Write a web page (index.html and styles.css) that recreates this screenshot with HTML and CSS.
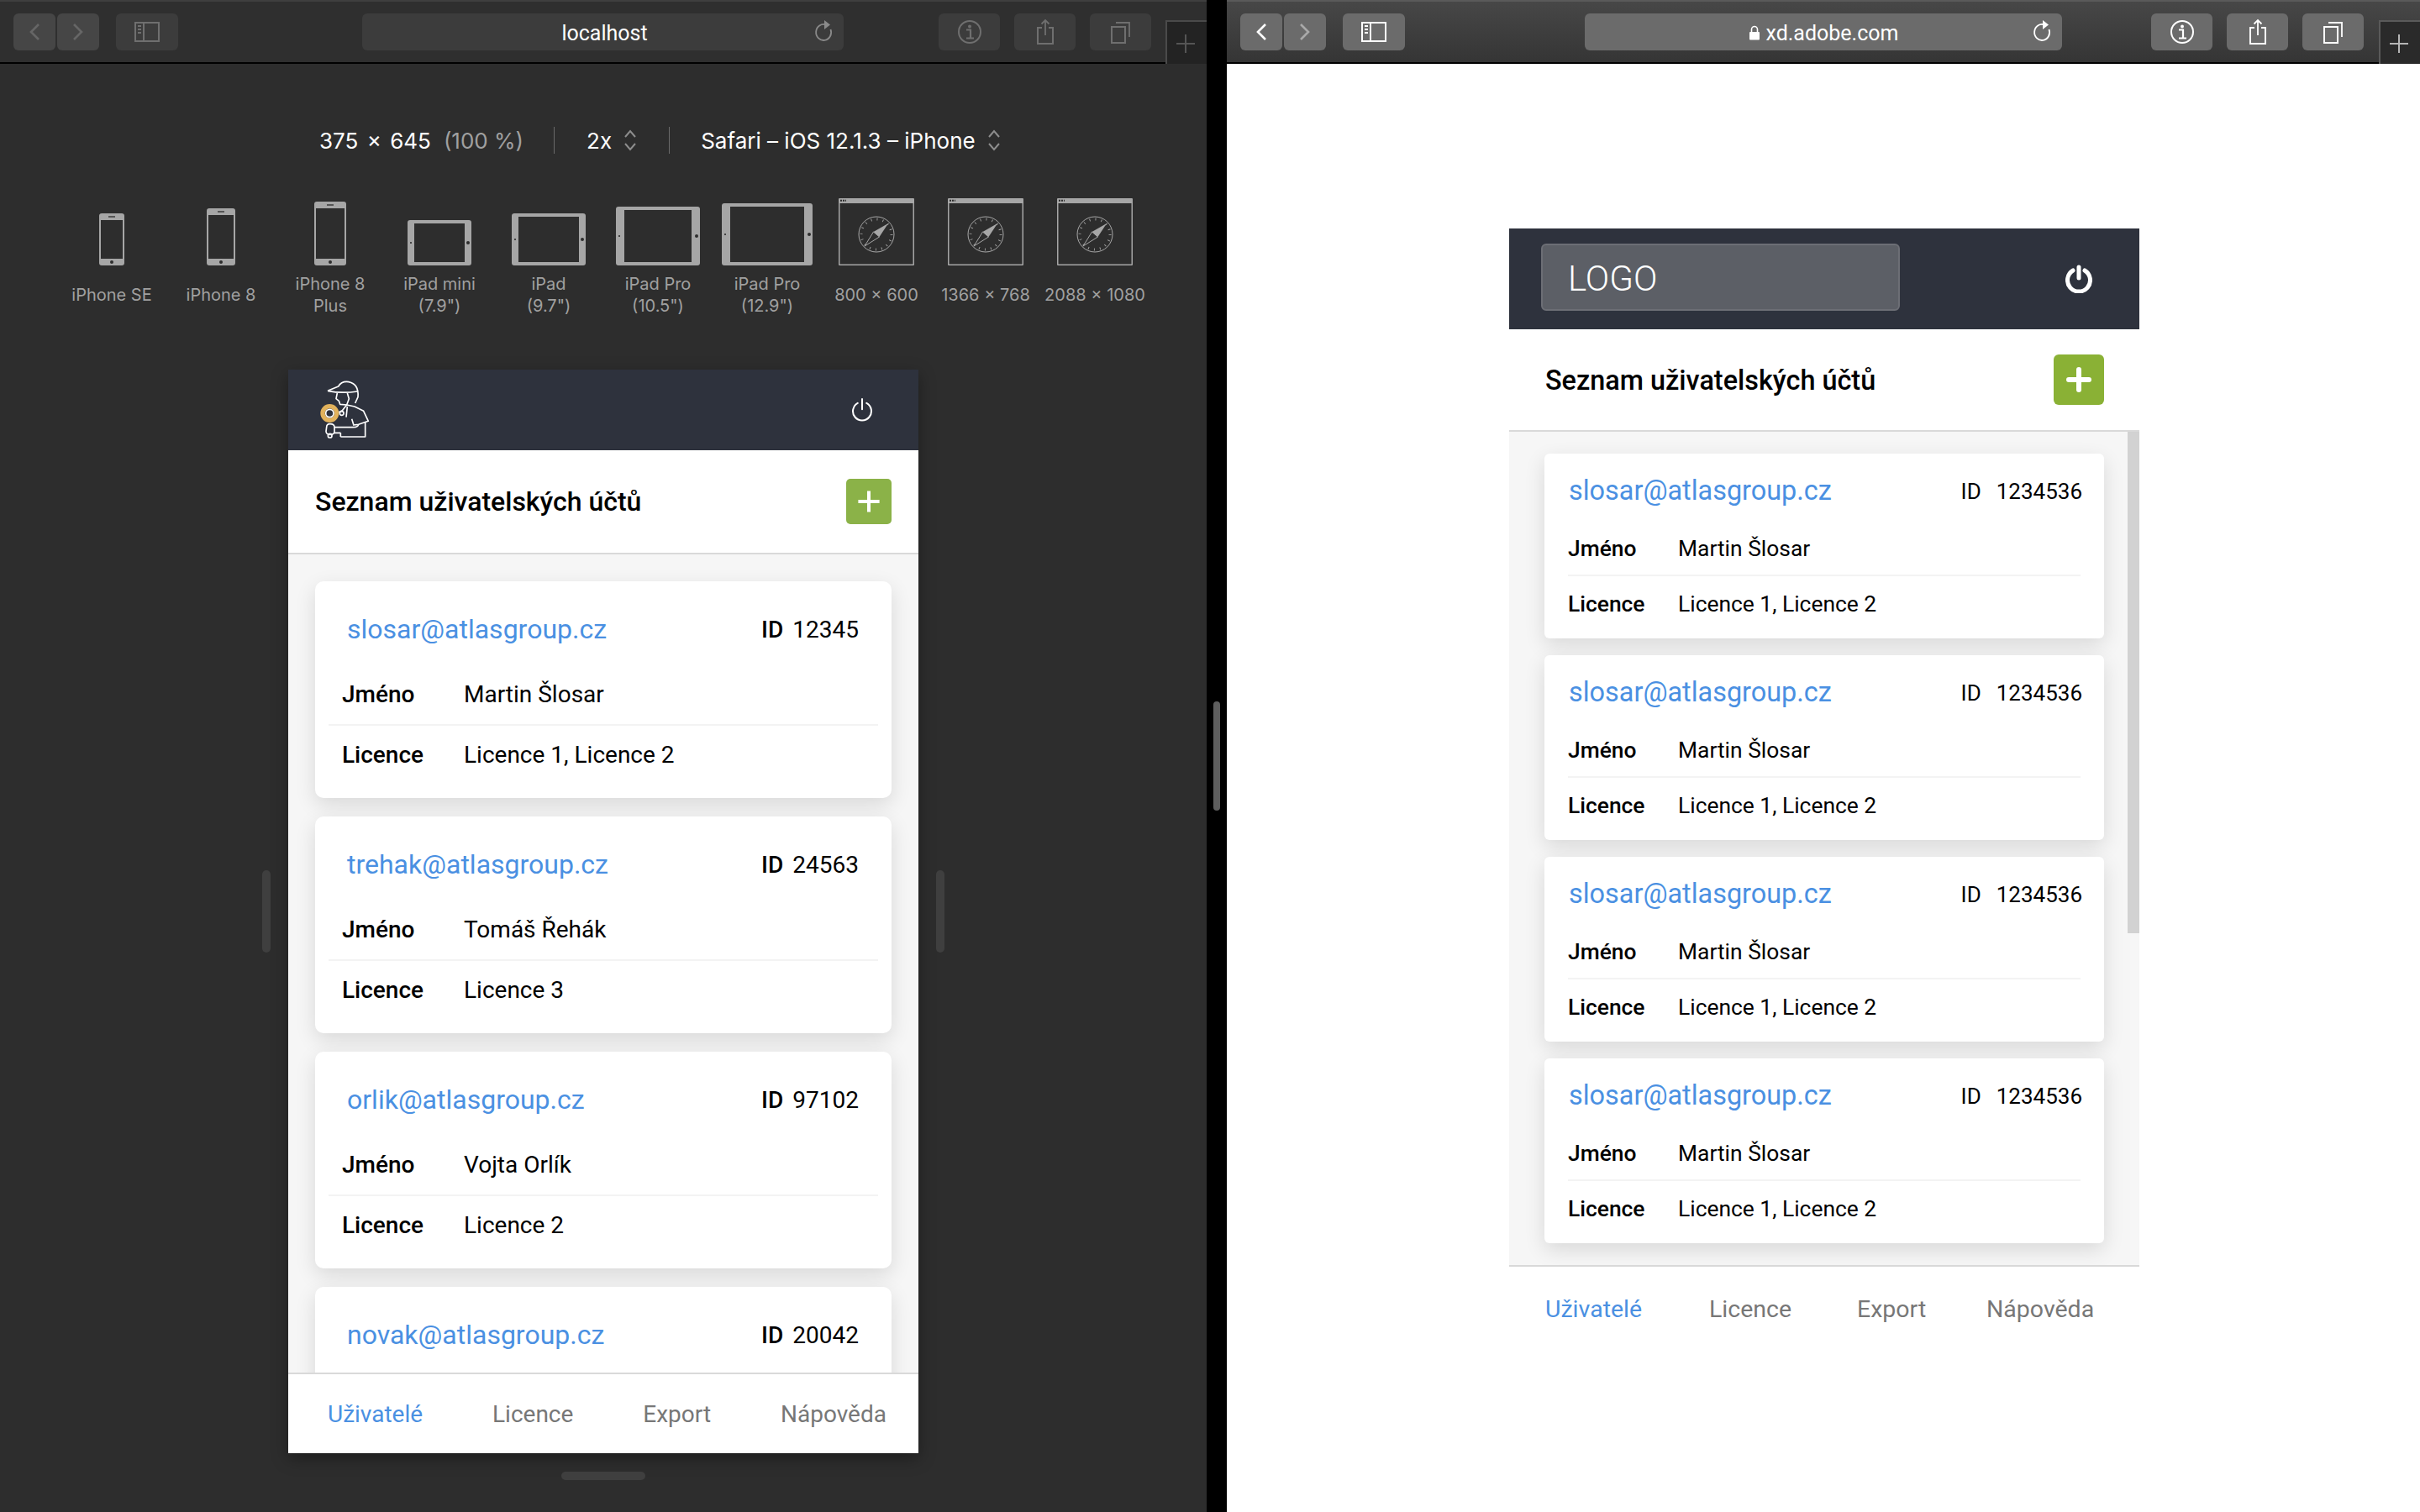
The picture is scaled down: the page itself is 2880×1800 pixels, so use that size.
FILE: index.html
```html
<!DOCTYPE html>
<html lang="en">
<head>
    <meta charset="UTF-8">
    <meta name="viewport" content="width=device-width, initial-scale=1.0">
    <title>Responsive Design Mode</title>
    <link rel="stylesheet" href="styles.css">
</head>
<body>
    <svg class="defs" width="0" height="0">
        <symbol id="i-back" viewBox="0 0 20 30"><path d="M15 6 L6 15 L15 24" fill="none" stroke="currentColor" stroke-width="2.6"/></symbol>
        <symbol id="i-forward" viewBox="0 0 20 30"><path d="M5 6 L14 15 L5 24" fill="none" stroke="currentColor" stroke-width="2.6"/></symbol>
        <symbol id="i-sidebar" viewBox="0 0 30 24"><path d="M1 1 H29 V23 H1 Z M11 1 V23" fill="none" stroke="currentColor" stroke-width="2"/><path d="M4 5 H8 M4 9 H8 M4 13 H8" stroke="currentColor" stroke-width="2"/></symbol>
        <symbol id="i-reload" viewBox="0 0 24 28"><path d="M15 6.5 A9 9.5 0 1 0 20.5 12" fill="none" stroke="currentColor" stroke-width="1.8"/><path d="M13 1 L20 6.5 L13 12 Z" fill="currentColor"/></symbol>
        <symbol id="i-info" viewBox="0 0 30 30"><circle cx="15" cy="15" r="13" fill="none" stroke="currentColor" stroke-width="2"/><circle cx="15" cy="8.5" r="2" fill="currentColor"/><path d="M11 12.5 H16 V22 M11 22.5 H20" fill="none" stroke="currentColor" stroke-width="2.2"/></symbol>
        <symbol id="i-share" viewBox="0 0 24 32"><path d="M8 11 H3 V30 H21 V11 H16" fill="none" stroke="currentColor" stroke-width="2"/><path d="M12 20 V2 M7.5 6.5 L12 2 L16.5 6.5" fill="none" stroke="currentColor" stroke-width="1.8"/></symbol>
        <symbol id="i-tabs" viewBox="0 0 26 28"><rect x="2" y="8" width="16" height="19" fill="none" stroke="currentColor" stroke-width="2"/><path d="M7 3 H23 V20" fill="none" stroke="currentColor" stroke-width="1.8"/></symbol>
        <symbol id="i-updown" viewBox="0 0 16 28"><path d="M2 10 L8 3 L14 10 M2 18 L8 25 L14 18" fill="none" stroke="#8d8d8d" stroke-width="2"/></symbol>
        <symbol id="i-compass" viewBox="0 0 44 44">
            <circle cx="22" cy="22" r="21" fill="none" stroke="#a6a6a6" stroke-width="1"/>
            <circle cx="22" cy="22" r="18" fill="none" stroke="#a6a6a6" stroke-width="3" stroke-dasharray="0.9 6.17"/>
            <path d="M36 9 L25.5 25 L18.5 19 Z" fill="#a6a6a6"/>
            <path d="M8 36 L18.5 19 L25.5 25 Z" fill="none" stroke="#a6a6a6" stroke-width="1"/>
        </symbol>
        <symbol id="i-window" viewBox="0 0 90 80">
            <rect x="0" y="0" width="90" height="80" fill="#a6a6a6" rx="1"/>
            <rect x="1.5" y="6" width="87" height="72.5" fill="#2d2d2d"/>
            <path d="M2 2.7 H9" stroke="#2d2d2d" stroke-width="2" stroke-dasharray="2 1"/>
            <use href="#i-compass" x="23" y="21" width="44" height="44"/>
        </symbol>
        <symbol id="i-power" viewBox="0 0 32 36"><path d="M9.5 8 A13.5 13.5 0 1 0 22.5 8" fill="none" stroke="currentColor" stroke-width="2.5" stroke-linecap="round"/><path d="M16 2 V17" fill="none" stroke="currentColor" stroke-width="2.5" stroke-linecap="round"/></symbol>
        <symbol id="i-power-bold" viewBox="0 0 32 34"><path d="M9 7 A13.5 13.5 0 1 0 23 7" fill="none" stroke="currentColor" stroke-width="5" stroke-linecap="round"/><path d="M16 3 V16" fill="none" stroke="currentColor" stroke-width="5" stroke-linecap="round"/></symbol>
        <symbol id="i-plus" viewBox="0 0 60 60"><path d="M30 16 V44 M16 30 H44" stroke="#fff" stroke-width="4.5" fill="none"/></symbol>
        <symbol id="i-plus-bold" viewBox="0 0 60 60"><path d="M30 18 V42 M18 30 H42" stroke="#fff" stroke-width="6" stroke-linecap="round" fill="none"/></symbol>
    </svg>

    <!-- left pane: responsive design mode -->
    <section class="pane pane-dark">
        <div class="toolbar">
            <div class="tool tool-back"><svg><use href="#i-back"/></svg></div>
            <div class="tool tool-forward"><svg><use href="#i-forward"/></svg></div>
            <div class="tool tool-sidebar"><svg><use href="#i-sidebar"/></svg></div>
            <div class="address"><span class="address-text">localhost</span><svg class="reload"><use href="#i-reload"/></svg></div>
            <div class="tool tool-info"><svg><use href="#i-info"/></svg></div>
            <div class="tool tool-share"><svg><use href="#i-share"/></svg></div>
            <div class="tool tool-tabs"><svg><use href="#i-tabs"/></svg></div>
            <div class="new-tab"><span class="plus-h"></span><span class="plus-v"></span></div>
        </div>

        <div class="rdm-info">
            <span class="size">375 × 645</span>
            <span class="percent">(100 %)</span>
            <span class="sep sep-first"></span>
            <span class="size">2x</span>
            <svg class="updown"><use href="#i-updown"/></svg>
            <span class="sep sep-second"></span>
            <span class="size">Safari – iOS 12.1.3 – iPhone</span>
            <svg class="updown"><use href="#i-updown"/></svg>
        </div>

        <div class="devices">
            <div class="device">
                <div class="device-icon"><div class="phone-shape se"><i class="dot"></i></div></div>
                <div class="device-label">iPhone SE</div>
            </div>
            <div class="device">
                <div class="device-icon"><div class="phone-shape eight"><i class="dot"></i></div></div>
                <div class="device-label">iPhone 8</div>
            </div>
            <div class="device">
                <div class="device-icon"><div class="phone-shape plus"><i class="dot"></i></div></div>
                <div class="device-label">iPhone 8<br>Plus</div>
            </div>
            <div class="device">
                <div class="device-icon"><div class="tablet-shape mini"><i class="dot"></i></div></div>
                <div class="device-label">iPad mini<br>(7.9")</div>
            </div>
            <div class="device">
                <div class="device-icon"><div class="tablet-shape ipad"><i class="dot"></i></div></div>
                <div class="device-label">iPad<br>(9.7")</div>
            </div>
            <div class="device">
                <div class="device-icon"><div class="tablet-shape pro10"><i class="dot"></i></div></div>
                <div class="device-label">iPad Pro<br>(10.5")</div>
            </div>
            <div class="device">
                <div class="device-icon"><div class="tablet-shape pro12"><i class="dot"></i></div></div>
                <div class="device-label">iPad Pro<br>(12.9")</div>
            </div>
            <div class="device">
                <div class="device-icon"><svg class="window"><use href="#i-window"/></svg></div>
                <div class="device-label">800 × 600</div>
            </div>
            <div class="device">
                <div class="device-icon"><svg class="window"><use href="#i-window"/></svg></div>
                <div class="device-label">1366 × 768</div>
            </div>
            <div class="device">
                <div class="device-icon"><svg class="window"><use href="#i-window"/></svg></div>
                <div class="device-label">2088 × 1080</div>
            </div>
        </div>

        <div class="stage">
            <span class="grip"></span>
            <div class="app app-live">
                <header class="app-header">
                    <svg class="logo" viewBox="0 0 300 270">
                        <g fill="none" stroke="#fff" stroke-width="5" stroke-linejoin="round">
                            <path d="M60 76 L98 60 Q110 40 135 44 Q172 52 168 98 L158 120"/>
                            <path d="M60 76 Q110 86 166 78"/>
                            <path d="M94 84 L90 104 L100 112 L104 124 L128 126 L136 104 L130 84"/>
                            <path d="M100 152 L112 146 L128 126 L156 132 L188 148 L205 184 L170 196 L150 198"/>
                            <path d="M130 132 L126 170 M146 176 L152 196"/>
                            <circle cx="110" cy="156" r="7"/>
                            <path d="M84 206 H150 Q168 206 170 196 M84 226 H106"/>
                            <path d="M106 240 H194 V186 M106 240 V226"/>
                            <path d="M56 206 Q56 194 68 194 Q84 194 84 206 V222 Q84 232 68 232 Q54 232 54 220 Z"/>
                            <circle cx="68" cy="236" r="7"/>
                        </g>
                        <circle cx="67" cy="156" r="25" fill="none" stroke="#e2b25c" stroke-width="16"/>
                        <circle cx="67" cy="156" r="14" fill="none" stroke="#fff" stroke-width="5"/>
                    </svg>
                    <svg class="power"><use href="#i-power"/></svg>
                </header>
                <div class="app-title">
                    <h1>Seznam uživatelských účtů</h1>
                    <button class="add"><svg><use href="#i-plus"/></svg></button>
                </div>
                <div class="list">
                    <article class="card">
                        <div class="card-head"><a class="email">slosar@atlasgroup.cz</a><span class="uid"><b>ID</b>12345</span></div>
                        <div class="card-row"><b>Jméno</b><span>Martin Šlosar</span></div>
                        <div class="card-row"><b>Licence</b><span>Licence 1, Licence 2</span></div>
                    </article>
                    <article class="card">
                        <div class="card-head"><a class="email">trehak@atlasgroup.cz</a><span class="uid"><b>ID</b>24563</span></div>
                        <div class="card-row"><b>Jméno</b><span>Tomáš Řehák</span></div>
                        <div class="card-row"><b>Licence</b><span>Licence 3</span></div>
                    </article>
                    <article class="card">
                        <div class="card-head"><a class="email">orlik@atlasgroup.cz</a><span class="uid"><b>ID</b>97102</span></div>
                        <div class="card-row"><b>Jméno</b><span>Vojta Orlík</span></div>
                        <div class="card-row"><b>Licence</b><span>Licence 2</span></div>
                    </article>
                    <article class="card">
                        <div class="card-head"><a class="email">novak@atlasgroup.cz</a><span class="uid"><b>ID</b>20042</span></div>
                    </article>
                </div>
                <nav class="app-nav">
                    <a class="active">Uživatelé</a>
                    <a>Licence</a>
                    <a>Export</a>
                    <a>Nápověda</a>
                </nav>
            </div>
            <span class="grip"></span>
        </div>
        <div class="grip-bottom"></div>
    </section>

    <div class="splitter"><span class="splitter-handle"></span></div>

    <!-- right pane: adobe xd prototype -->
    <section class="pane pane-light">
        <div class="toolbar">
            <div class="tool tool-back"><svg><use href="#i-back"/></svg></div>
            <div class="tool tool-forward"><svg><use href="#i-forward"/></svg></div>
            <div class="tool tool-sidebar"><svg><use href="#i-sidebar"/></svg></div>
            <div class="address">
                <span class="address-text">
                    <svg class="lock" viewBox="0 0 14 18"><path d="M3.5 8 V5 A3.5 3.5 0 0 1 10.5 5 V8" fill="none" stroke="#fff" stroke-width="1.6"/><rect x="1" y="8" width="12" height="9.5" rx="1" fill="#fff"/></svg>xd.adobe.com
                </span>
                <svg class="reload"><use href="#i-reload"/></svg>
            </div>
            <div class="tool tool-info"><svg><use href="#i-info"/></svg></div>
            <div class="tool tool-share"><svg><use href="#i-share"/></svg></div>
            <div class="tool tool-tabs"><svg><use href="#i-tabs"/></svg></div>
            <div class="new-tab"><span class="plus-h"></span><span class="plus-v"></span></div>
        </div>

        <div class="proto">
            <div class="app app-proto">
                <header class="app-header">
                    <div class="logo-box">LOGO</div>
                    <svg class="power"><use href="#i-power-bold"/></svg>
                </header>
                <div class="app-title">
                    <h1>Seznam uživatelských účtů</h1>
                    <button class="add"><svg><use href="#i-plus-bold"/></svg></button>
                </div>
                <div class="list">
                    <span class="scroll-thumb"></span>
                    <article class="card">
                        <div class="card-head"><a class="email">slosar@atlasgroup.cz</a><span class="uid"><b>ID</b>1234536</span></div>
                        <div class="card-row"><b>Jméno</b><span>Martin Šlosar</span></div>
                        <div class="card-row"><b>Licence</b><span>Licence 1, Licence 2</span></div>
                    </article>
                    <article class="card">
                        <div class="card-head"><a class="email">slosar@atlasgroup.cz</a><span class="uid"><b>ID</b>1234536</span></div>
                        <div class="card-row"><b>Jméno</b><span>Martin Šlosar</span></div>
                        <div class="card-row"><b>Licence</b><span>Licence 1, Licence 2</span></div>
                    </article>
                    <article class="card">
                        <div class="card-head"><a class="email">slosar@atlasgroup.cz</a><span class="uid"><b>ID</b>1234536</span></div>
                        <div class="card-row"><b>Jméno</b><span>Martin Šlosar</span></div>
                        <div class="card-row"><b>Licence</b><span>Licence 1, Licence 2</span></div>
                    </article>
                    <article class="card">
                        <div class="card-head"><a class="email">slosar@atlasgroup.cz</a><span class="uid"><b>ID</b>1234536</span></div>
                        <div class="card-row"><b>Jméno</b><span>Martin Šlosar</span></div>
                        <div class="card-row"><b>Licence</b><span>Licence 1, Licence 2</span></div>
                    </article>
                </div>
                <nav class="app-nav">
                    <a class="active">Uživatelé</a>
                    <a>Licence</a>
                    <a>Export</a>
                    <a>Nápověda</a>
                </nav>
            </div>
        </div>
    </section>
</body>
</html>
```
FILE: styles.css
```css
* {
    box-sizing: border-box;
}

body {
    margin: 0;
    width: 2880px;
    height: 1800px;
    display: flex;
    overflow: hidden;
    background-color: #000;
    font-family: Roboto, "Noto Sans", sans-serif;
}

.defs {
    position: absolute;
}

.pane {
    height: 1800px;
    display: flex;
    flex-direction: column;
}

.pane-dark {
    width: 1436px;
    background-color: #2d2d2d;
}

.pane-light {
    width: 1420px;
    background-color: #fff;
}

.splitter {
    width: 24px;
    background-color: #000;
    display: flex;
    align-items: center;
    justify-content: center;
}

.splitter-handle {
    width: 8px;
    height: 130px;
    border-radius: 4px;
    background-color: #5e5e5e;
}

/* browser toolbar */
.toolbar {
    height: 76px;
    flex: none;
    display: flex;
    padding-top: 16px;
    border-top: 2px solid #4a4a4a;
    border-bottom: 2px solid #000;
    position: relative;
}

.pane-dark .toolbar {
    background-color: #2f2f2f;
    border-top-color: #3f3f3f;
    color: #6f6f6f;
}

.pane-light .toolbar {
    background: linear-gradient(#474747, #353535);
    border-top-color: #5a5a5a;
    color: #fff;
}

.tool,
.address {
    height: 44px;
    margin-top: -2px;
    border-radius: 6px;
    display: flex;
    align-items: center;
    justify-content: center;
    background-color: #3c3c3c;
}

.pane-dark .tool-back,
.pane-dark .tool-forward {
    background-color: #464646;
    color: #666;
}

.pane-light .tool,
.pane-light .address {
    background-color: #6b6b6b;
}

.tool-back {
    width: 50px;
    margin-left: 16px;
}

.tool-forward {
    width: 50px;
    margin-left: 2px;
}

.tool-sidebar {
    width: 74px;
    margin-left: 20px;
}

.tool-info,
.tool-share,
.tool-tabs {
    width: 73px;
    margin-left: 17px;
}

.tool-back svg,
.tool-forward svg {
    width: 20px;
    height: 30px;
}

.pane-light .tool-forward svg {
    color: #a9a9a9;
}

.tool-sidebar svg {
    width: 30px;
    height: 24px;
}

.tool-info svg {
    width: 30px;
    height: 30px;
}

.tool-share svg {
    width: 24px;
    height: 32px;
}

.tool-tabs svg {
    width: 26px;
    height: 28px;
}

.address {
    position: relative;
    width: 573px;
    margin-left: 219px;
    font-size: 25px;
    color: #fff;
}

.pane-dark .address-text {
    padding: 2px 0 0 4px;
}

.pane-dark .tool-info {
    margin-left: 113px;
}

.pane-light .address {
    width: 568px;
    margin-left: 214px;
}

.pane-light .tool-info {
    margin-left: 106px;
}

.address-text {
    display: flex;
    align-items: center;
    gap: 7px;
    padding-top: 2px;
}

.lock {
    width: 14px;
    height: 18px;
}

.reload {
    position: absolute;
    right: 12px;
    top: 7px;
    width: 24px;
    height: 28px;
    color: #8a8a8a;
}

.pane-light .reload {
    color: #fff;
}

.new-tab {
    position: absolute;
    right: 0;
    top: 22px;
    width: 49px;
    height: 52px;
    background-color: #232323;
    border-top: 2px solid #4a4a4a;
    border-left: 2px solid #4a4a4a;
}

.pane-light .new-tab {
    background-color: #2a2a2a;
    border-color: #5a5a5a;
}

.plus-h,
.plus-v {
    position: absolute;
    background-color: #555;
}

.pane-light .plus-h,
.pane-light .plus-v {
    background-color: #b5b5b5;
}

.plus-h {
    left: 11px;
    top: 25px;
    width: 22px;
    height: 2px;
}

.plus-v {
    left: 21px;
    top: 15px;
    width: 2px;
    height: 22px;
}

/* responsive design mode header */
.rdm-info {
    height: 40px;
    margin-top: 71px;
    padding-left: 380px;
    display: flex;
    align-items: center;
    font-family: Inter, Roboto, sans-serif;
    font-size: 26px;
    color: #fff;
}

.size {
    white-space: pre;
}

.rdm-info .size:first-child {
    word-spacing: 3px;
}

.percent {
    margin-left: 15px;
    color: #a0a0a0;
}

.sep {
    width: 1px;
    height: 32px;
    background-color: #6a6a6a;
}

.sep-first {
    margin: 0 38px 0 36px;
}

.sep-second {
    margin: 0 37px 0 38px;
}

.updown {
    width: 16px;
    height: 28px;
    margin-left: 14px;
}

.devices {
    margin-top: 49px;
    padding-left: 68px;
    display: grid;
    grid-template-columns: repeat(10, 130px);
}

.device {
    display: flex;
    flex-direction: column;
    align-items: center;
}

.device-icon {
    height: 80px;
    display: flex;
    align-items: flex-end;
    justify-content: center;
}

.device-label {
    height: 52px;
    margin-top: 9px;
    white-space: nowrap;
    display: flex;
    align-items: center;
    text-align: center;
    font-family: Inter, Roboto, sans-serif;
    font-size: 20px;
    line-height: 26px;
    color: #a0a0a0;
}

.phone-shape,
.tablet-shape {
    position: relative;
    background-color: #a6a6a6;
    border-radius: 3px;
}

.phone-shape::after,
.tablet-shape::after {
    content: "";
    position: absolute;
    background-color: #2d2d2d;
}

.phone-shape::before {
    content: "";
    position: absolute;
    left: 50%;
    top: 3px;
    width: 8px;
    height: 2px;
    margin-left: -4px;
    background-color: #555;
}

.tablet-shape::before {
    content: "";
    position: absolute;
    left: 3px;
    top: 50%;
    width: 2px;
    height: 2px;
    margin-top: -1px;
    background-color: #444;
}

.dot {
    position: absolute;
    width: 4px;
    height: 4px;
    border-radius: 50%;
    background-color: #2d2d2d;
}

.phone-shape .dot {
    left: 50%;
    bottom: 2px;
    margin-left: -2px;
}

.tablet-shape .dot {
    right: 2px;
    top: 50%;
    margin-top: -2px;
}

.phone-shape::after {
    left: 2px;
    right: 2px;
    top: 8px;
    bottom: 8px;
}

.tablet-shape::after {
    left: 8px;
    right: 8px;
    top: 4px;
    bottom: 4px;
}

.se {
    width: 30px;
    height: 62px;
}

.eight {
    width: 34px;
    height: 68px;
}

.plus {
    width: 38px;
    height: 76px;
}

.mini {
    width: 76px;
    height: 54px;
}

.ipad {
    width: 88px;
    height: 62px;
}

.pro10 {
    width: 100px;
    height: 70px;
}

.pro12 {
    width: 108px;
    height: 74px;
}

.pro10::after,
.pro12::after {
    left: 10px;
    right: 10px;
}

.window {
    width: 90px;
    height: 80px;
}

/* the app, same markup in both panes */
.stage {
    margin-top: 63px;
    display: flex;
    align-items: center;
    justify-content: center;
    gap: 21px;
}

.grip {
    width: 10px;
    height: 98px;
    border-radius: 5px;
    background-color: #3f3f3f;
}

.grip-bottom {
    width: 100px;
    height: 10px;
    margin: 22px 0 0 668px;
    border-radius: 5px;
    background-color: #3f3f3f;
}

.app {
    width: 750px;
    display: flex;
    flex-direction: column;
    background-color: #fff;
}

.app-live {
    height: 1290px;
    box-shadow: 0 6px 18px rgba(0, 0, 0, 0.35);
}

.proto {
    padding: 196px 0 0 336px;
}

.app-proto {
    height: 1338px;
}

.app-header {
    height: 96px;
    flex: none;
    display: flex;
    align-items: center;
    justify-content: space-between;
    padding: 0 54px 0 27px;
    background-color: #2e323d;
    color: #fff;
}

.logo {
    width: 100px;
    height: 90px;
    margin-top: -6px;
}

.power {
    width: 26px;
    height: 30px;
}

.app-title {
    height: 124px;
    flex: none;
    display: flex;
    align-items: center;
    justify-content: space-between;
    padding: 0 32px;
    border-bottom: 2px solid #d9d9d9;
}

h1 {
    margin: 0;
    font-size: 32px;
    font-weight: 500;
    color: #000;
}

.add {
    width: 54px;
    height: 54px;
    padding: 0;
    border: none;
    border-radius: 5px;
    background-color: #8bb248;
}

.add svg {
    display: block;
    width: 100%;
    height: 100%;
}

.list {
    position: relative;
    flex: 1;
    min-height: 0;
    overflow: hidden;
    display: flex;
    flex-direction: column;
    gap: 22px;
    padding: 32px 32px 0;
    background-color: #f6f6f6;
}

.card {
    flex: none;
    height: 258px;
    padding: 16px;
    border-radius: 10px;
    background-color: #fff;
    box-shadow: 0 8px 24px rgba(0, 0, 0, 0.12);
}

.card-head {
    height: 82px;
    padding: 0 23px 0 22px;
    display: flex;
    align-items: center;
    justify-content: space-between;
}

.email {
    font-size: 32px;
    color: #4a90e2;
}

.uid {
    font-size: 28px;
    color: #000;
}

.uid b {
    font-weight: 500;
    margin-right: 11px;
}

.card-row {
    height: 72px;
    padding-left: 16px;
    display: flex;
    align-items: center;
    font-size: 28px;
    color: #000;
}

.card-row + .card-row {
    height: 72px;
    padding-bottom: 2px;
    border-top: 2px solid #f3f3f3;
}

.card-row b {
    width: 145px;
    font-weight: 500;
}

.app-nav {
    height: 96px;
    flex: none;
    display: flex;
    align-items: center;
    justify-content: space-between;
    padding: 0 38px 0 47px;
    border-top: 2px solid #d9d9d9;
    font-size: 28px;
    color: #777;
}

.app-nav .active {
    color: #4a90e2;
}

/* prototype sizes in the right pane */
.app-proto .app-header {
    height: 120px;
    padding: 0 56px 0 38px;
}

.logo-box {
    width: 427px;
    height: 80px;
    margin-top: -4px;
    padding: 3px 0 0 30px;
    display: flex;
    align-items: center;
    border: 2px solid #6c6e75;
    border-radius: 6px;
    background-color: #5c5f66;
    font-size: 42px;
    font-weight: 300;
}

.app-proto .power {
    width: 32px;
    height: 34px;
}

.app-proto h1 {
    padding-top: 2px;
    font-size: 32.4px;
}

.app-proto .app-title {
    height: 122px;
    padding: 0 42px 0 43px;
}

.app-proto .add {
    width: 60px;
    height: 60px;
    border-radius: 6px;
    background-color: #8ab135;
}

.app-proto .list {
    height: 992px;
    flex: none;
    gap: 20px;
    padding: 26px 42px 0;
}

.app-proto .card {
    height: 220px;
    padding: 6px 28px 8px;
    border-radius: 6px;
}

.app-proto .card-head {
    height: 76px;
    margin-right: -2px;
    padding: 0 0 0 1px;
}

.app-proto .email {
    font-size: 32.4px;
}

.app-proto .uid {
    padding-top: 2px;
    font-size: 26px;
}

.app-proto .card-row {
    height: 62px;
    padding-left: 0;
    font-size: 26.4px;
}

.app-proto .card-row + .card-row {
    height: 68px;
    padding-bottom: 0;
}

.app-proto .card-row b {
    width: 131px;
}

.app-proto .uid b {
    font-weight: 400;
    margin-right: 18px;
}

.scroll-thumb {
    position: absolute;
    right: 0;
    top: 0;
    width: 14px;
    height: 597px;
    background-color: #d2d2d2;
}

.app-proto .app-nav {
    height: 102px;
    display: grid;
    grid-template-columns: 195px 176px 154px auto;
    justify-content: start;
    padding: 0 0 0 43px;
    font-size: 28.5px;
}
```
